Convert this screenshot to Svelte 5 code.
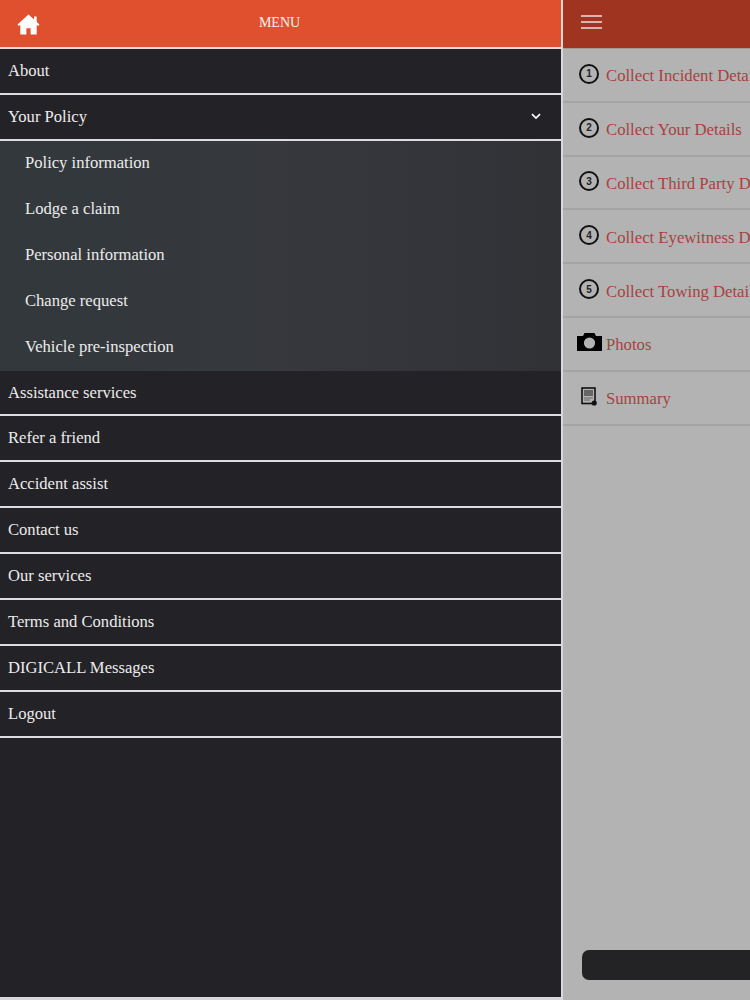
<script>
  const before = ['About'];
  const subs = ['Policy information', 'Lodge a claim', 'Personal information', 'Change request', 'Vehicle pre-inspection'];
  const after = ['Refer a friend', 'Accident assist', 'Contact us', 'Our services', 'Terms and Conditions', 'DIGICALL Messages', 'Logout'];
  const steps = ['Collect Incident Details', 'Collect Your Details', 'Collect Third Party Details', 'Collect Eyewitness Details', 'Collect Towing Details'];
</script>

<div class="page">
  <aside class="menu">
    <header class="menu-head">
      <svg class="home" viewBox="0 0 24 22" aria-hidden="true">
        <path d="M12 0.5 L0.5 11 L1.8 12.6 L3.4 11.3 V21.5 H9.8 V15 H14.2 V21.5 H20.6 V11.3 L22.2 12.6 L23.5 11 L20.6 8.3 V2.5 H17.8 V5.8 Z" fill="#fff" />
      </svg>
      <span>MENU</span>
    </header>
    {#each before as item}
      <div class="row">{item}</div>
    {/each}
    <div class="row policy">
      Your Policy
      <svg class="chev" viewBox="0 0 10 7" aria-hidden="true"><path d="M1 1.2 L5 5 L9 1.2" /></svg>
    </div>
    <div class="subs">
      {#each subs as item}
        <div class="sub">{item}</div>
      {/each}
    </div>
    <div class="row first">Assistance services</div>
    {#each after as item}
      <div class="row">{item}</div>
    {/each}
  </aside>

  <main class="panel">
    <header class="panel-head">
      <div class="burger"><i></i><i></i><i></i></div>
    </header>
    {#each steps as step, i}
      <div class="step">
        <span class="num">{i + 1}</span>
        <span class="label">{step}</span>
      </div>
    {/each}
    <div class="step">
      <svg class="cam" viewBox="0 0 25 18" aria-hidden="true">
        <path d="M0 3 H6 L7.5 0 H17.5 L19 3 H25 V18 H0 Z" fill="#000" />
        <circle cx="12.5" cy="10" r="5.6" fill="#b4b3b4" />
      </svg>
      <span class="label">Photos</span>
    </div>
    <div class="step">
      <svg class="sum" viewBox="0 0 16 19" aria-hidden="true">
        <rect x="1" y="1" width="13" height="15.5" fill="#b4b3b4" stroke="#111" stroke-width="1.6" />
        <rect x="3" y="3" width="9" height="6" fill="#666" />
        <path d="M3 11 H12 M3 13 H9" stroke="#666" stroke-width="1" />
        <circle cx="13.2" cy="16" r="2.6" fill="#111" />
      </svg>
      <span class="label">Summary</span>
    </div>
    <div class="grow"></div>
    <div class="action"></div>
  </main>
</div>

<style>
  :global(body) {
    margin: 0;
    background: #b4b3b4;
  }
  .page {
    display: flex;
    width: 750px;
    height: 1000px;
    overflow: hidden;
    font-family: "Liberation Serif", "Times New Roman", serif;
  }
  .menu {
    width: 561px;
    height: 997px;
    flex: none;
    background: #232227;
    color: #ececec;
    font-size: 16.6px;
    border-bottom: 3px solid #d8d8da;
  }
  .menu-head {
    height: 47px;
    background: #e0502f;
    color: #f6f0ee;
    font-size: 14px;
    display: flex;
    align-items: center;
    justify-content: center;
    padding-right: 2px;
    padding-bottom: 2px;
    box-sizing: border-box;
    position: relative;
    margin-bottom: 2px;
    box-shadow: 0 2px 0 #e4dcd8;
  }
  .home {
    position: absolute;
    left: 17px;
    top: 14px;
    width: 23px;
    height: 21px;
  }
  .row {
    height: 44px;
    padding-left: 8px;
    display: flex;
    align-items: center;
    position: relative;
    border-bottom: 2px solid #dcdce0;
  }
  .first {
    height: 43px;
  }
  .chev {
    position: absolute;
    right: 20px;
    top: 18px;
    width: 10px;
    height: 7px;
    fill: none;
    stroke: #fff;
    stroke-width: 1.7;
  }
  .subs {
    height: 230px;
    background: linear-gradient(90deg, #32383b, #36383d 50%, #313236);
  }
  .sub {
    height: 44px;
    padding-bottom: 2px;
    padding-left: 25px;
    display: flex;
    align-items: center;
  }
  .panel {
    flex: 1;
    min-width: 0;
    border-left: 2px solid #d9d9db;
    display: flex;
    flex-direction: column;
    height: 1000px;
    box-sizing: border-box;
    background: #b4b3b4;
  }
  .panel-head {
    flex: none;
    background: #9f3520;
    border-bottom: 1px solid #a89a96;
    display: flex;
    align-items: center;
    padding-left: 18px;
    padding-bottom: 4px;
    height: 44px;
  }
  .burger {
    width: 21px;
    display: flex;
    flex-direction: column;
    gap: 3.6px;
  }
  .burger i {
    height: 2.4px;
    background: #dcb3a8;
  }
  .step {
    height: 53.8px;
    box-sizing: border-box;
    flex: none;
    border-bottom: 2px solid #a5a4a5;
    display: flex;
    align-items: center;
    padding-left: 16px;
    white-space: nowrap;
    position: relative;
    overflow: hidden;
  }
  .num {
    width: 16px;
    height: 16px;
    border: 2px solid #111;
    border-radius: 50%;
    font: bold 10px "Liberation Sans", sans-serif;
    color: #222;
    display: flex;
    align-items: center;
    justify-content: center;
    margin-right: 7px;
    margin-top: -2px;
    flex: none;
  }
  .label {
    color: #a5433f;
    font-size: 16.7px;
    margin-top: 3px;
  }
  .cam {
    width: 25px;
    height: 18px;
    position: absolute;
    left: 14px;
    top: 15px;
  }
  .sum {
    width: 16px;
    height: 19px;
    position: absolute;
    left: 18px;
    top: 15px;
  }
  .step:has(.cam) .label,
  .step:has(.sum) .label {
    margin-left: 27px;
  }
  .grow {
    flex: 1;
  }
  .action {
    height: 30px;
    margin: 0 -20px 20px 19px;
    flex: none;
    background: #232225;
    border-radius: 7px;
  }
</style>
